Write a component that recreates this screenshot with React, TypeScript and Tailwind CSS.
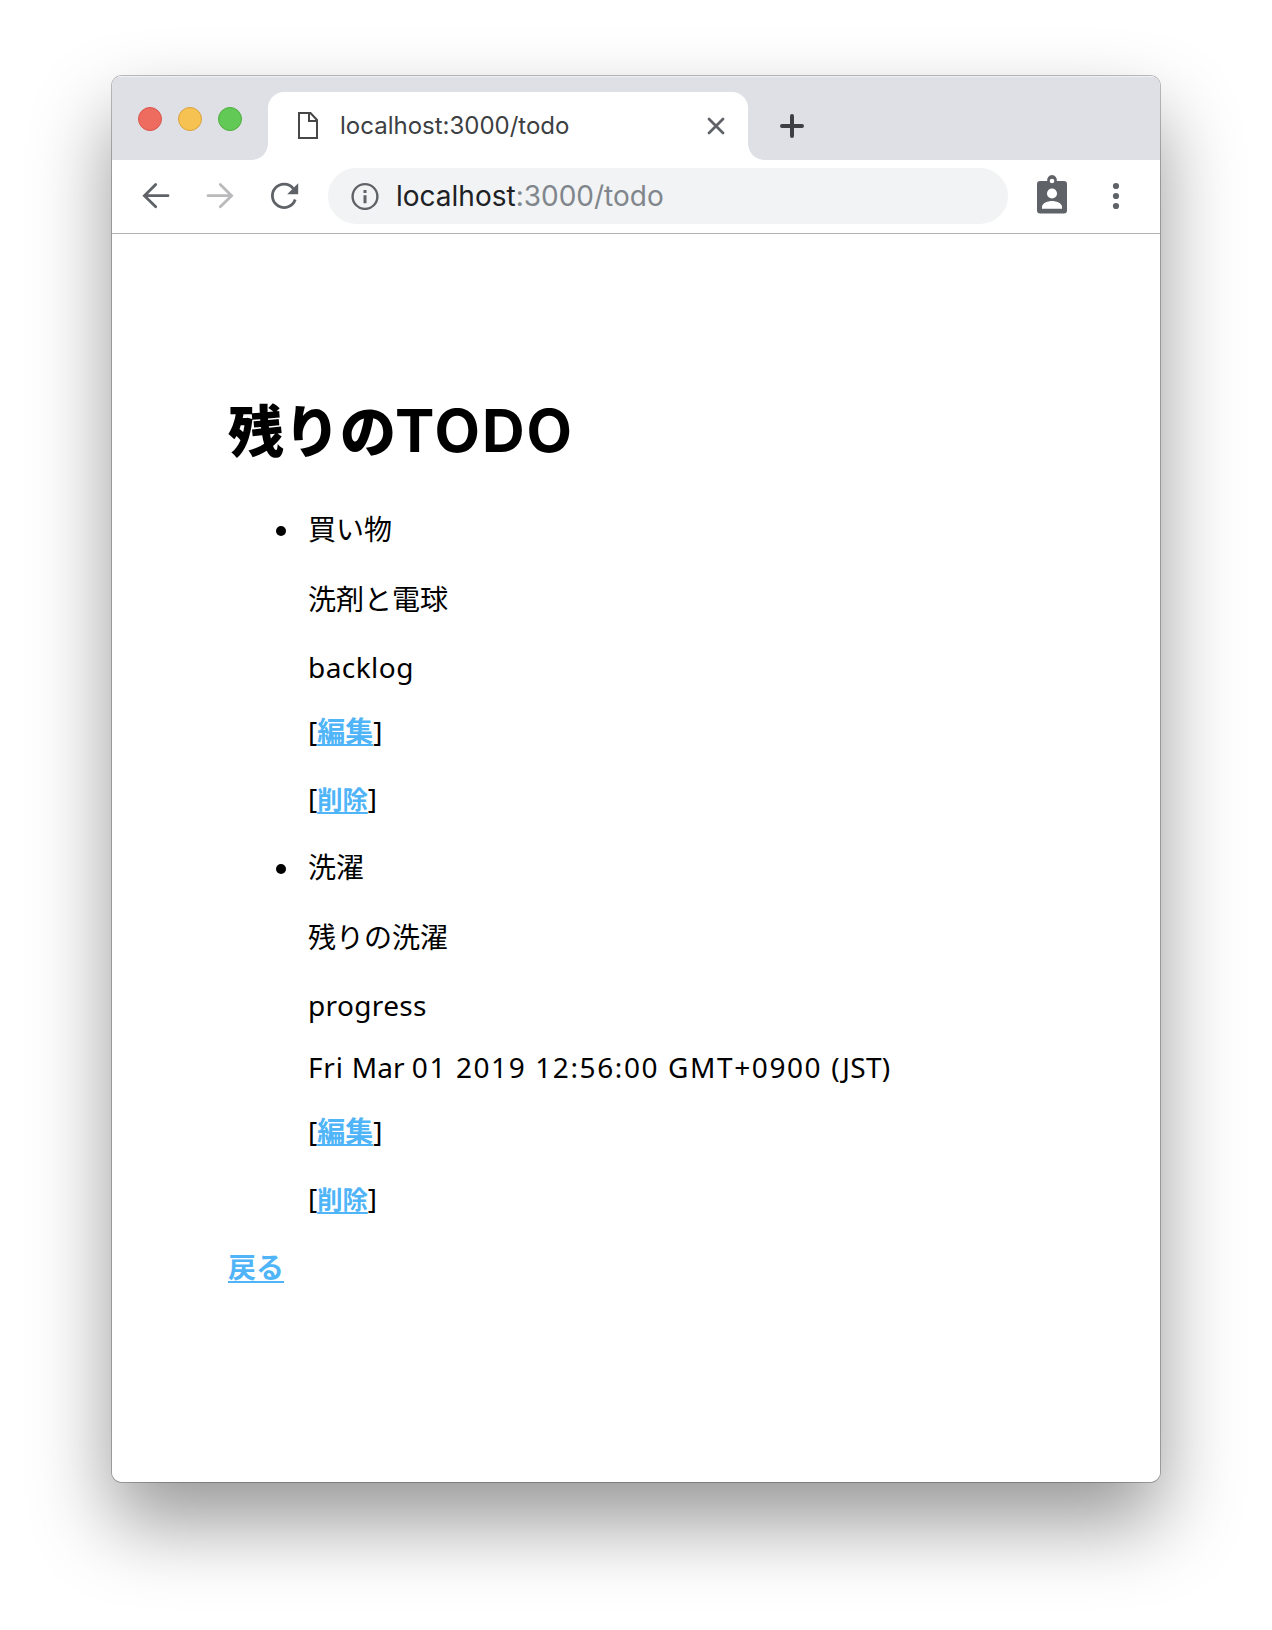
import type { ReactNode } from "react";

function TabBar() {
  return (
    <div className="flex h-[84px] bg-[#dfe0e6] shadow-[inset_0_2px_1px_-1px_#f1f1f4]">
      <div className="flex w-[156px] gap-4 pt-[31px] pl-[26px]">
        <span className="size-6 rounded-full border border-[#d9564b] bg-[#ed6b5f]" />
        <span className="size-6 rounded-full border border-[#dba23d] bg-[#f6c251]" />
        <span className="size-6 rounded-full border border-[#4fae3d] bg-[#62c956]" />
      </div>
      <div className="relative mt-4 flex w-[480px] items-center rounded-t-2xl bg-white pl-[29px]">
        <span className="absolute bottom-0 -left-4 size-4 bg-[radial-gradient(circle_at_0_0,transparent_15.5px,white_16px)]" />
        <span className="absolute -right-4 bottom-0 size-4 bg-[radial-gradient(circle_at_100%_0,transparent_15.5px,white_16px)]" />
        <svg className="h-[30px] w-[22px]" viewBox="0 0 22 30" fill="none" stroke="#474747" strokeWidth="2">
          <path d="M2 2h11.5l6.5 7v18H2zM12 2v8h8" />
        </svg>
        <span className="ml-[21px] w-[366px] font-['Inter'] text-[24px] leading-[30px] whitespace-nowrap text-[#3c4043]">
          localhost:3000/todo
        </span>
        <svg className="size-5 shrink-0" viewBox="0 0 20 20" stroke="#5f6368" strokeWidth="2.8" strokeLinecap="round">
          <path d="M3 3l14 14M17 3L3 17" />
        </svg>
      </div>
      <svg className="mt-9 ml-[30px] size-7" viewBox="0 0 28 28" stroke="#3c4043" strokeWidth="4" strokeLinecap="round">
        <path d="M14 4v20M4 14h20" />
      </svg>
    </div>
  );
}

function Toolbar() {
  return (
    <div className="flex h-[74px] items-start border-b border-[#b2b2b3] bg-white">
      <svg className="mt-5 ml-[28px] size-8" viewBox="0 0 32 32" fill="none" stroke="#5f6368" strokeWidth="2.8" strokeLinecap="round">
        <path d="M28 15.7H5M15.7 4.5L4.4 15.7L15.7 26.8" />
      </svg>
      <svg className="mt-5 ml-8 size-8" viewBox="0 0 32 32" fill="none" stroke="#bababc" strokeWidth="2.8" strokeLinecap="round">
        <path d="M4 15.7h23M16.3 4.5l11.3 11.2l-11.3 11.1" />
      </svg>
      <svg className="mt-5 ml-8 size-8" viewBox="0 0 32 32" fill="none">
        <path d="M27.2 19.5A11.7 11.7 0 1 1 25.3 8.6" stroke="#5f6368" strokeWidth="2.8" />
        <path d="M30.2 3.2v11H19.2z" fill="#5f6368" />
      </svg>
      <div className="mt-2 ml-[28px] flex h-14 w-[680px] items-center rounded-full bg-[#f1f3f4] pl-[22.500px]">
        <svg className="size-7 shrink-0" viewBox="0 0 28 28">
          <circle cx="14" cy="14.5" r="12.4" fill="none" stroke="#5f6368" strokeWidth="2.4" />
          <path d="M12.500 8h3v3h-3zM12.500 13.300h3v8h-3z" fill="#5f6368" />
        </svg>
        <span className="ml-[17.500px] font-['Inter'] text-[28px] leading-9 whitespace-nowrap text-[#202124]">
          localhost<span className="text-[#80868b]">:3000/todo</span>
        </span>
      </div>
      <svg className="mt-[15px] ml-[29px] h-[40px] w-[30px]" viewBox="0 0 30 40">
        <path
          fillRule="evenodd"
          fill="#5f6368"
          d="M3 6H10.200A4.900 4.900 0 1 1 19.800 6H27a3 3 0 0 1 3 3V35.600a3 3 0 0 1-3 3H3a3 3 0 0 1-3-3V9a3 3 0 0 1 3-3zM15 3.700a2.300 2.300 0 1 0 0 4.600a2.300 2.300 0 1 0 0-4.600zM15 13.500a5 5 0 1 0 0 10.100a5 5 0 1 0 0-10.100zM5 33.700H25V32C25 28 19 26 15 26S5 28 5 32z"
        />
      </svg>
      <svg className="mt-5 ml-[33px] size-8" viewBox="0 0 32 32" fill="#5f6368">
        <circle cx="16" cy="6" r="3.1" />
        <circle cx="16" cy="16" r="3.1" />
        <circle cx="16" cy="26" r="3.1" />
      </svg>
    </div>
  );
}

function Bullet() {
  return <span className="absolute top-[17px] -left-[32px] size-2.5 rounded-full bg-black" />;
}

function Actions() {
  return (
    <>
      <p className="mt-6">
        [
        <a className="font-bold text-[#50b4f8] underline decoration-2 underline-offset-[2px] [text-decoration-skip-ink:none]">編集</a>
        ]
      </p>
      <p className="mt-[27px]">
        [
        <a className="text-[25.300px] font-bold text-[#50b4f8] underline decoration-2 underline-offset-[3px] [text-decoration-skip-ink:none]">削除</a>
        ]
      </p>
    </>
  );
}

function Todo({ title, children }: { title: string; children: ReactNode }) {
  return (
    <li className="mb-7">
      <p className="relative">
        <Bullet />
        {title}
      </p>
      {children}
      <Actions />
    </li>
  );
}

export default function App() {
  return (
    <div className="h-[1630px] w-[1272px] overflow-hidden bg-white pt-[76px] pl-[112px]">
      <div className="h-[1406px] w-[1048px] rounded-[10px] shadow-[0_0_0_1px_rgba(0,0,0,0.25),0_40px_80px_rgba(0,0,0,0.41)]">
        <div className="flex h-full flex-col overflow-hidden rounded-[10px] bg-white">
          <TabBar />
          <Toolbar />
          <main className="pt-[156px] pl-[116px] font-['Noto_Sans','Noto_Sans_CJK_JP',sans-serif] text-[28px] leading-[40px] text-black">
            <h1 className="h-20 text-[56px] leading-[80px] font-black whitespace-nowrap">
              残りの<span className="-ml-px font-['Inter'] text-[59px] font-bold tracking-[2px]">TODO</span>
            </h1>
            <ul className="mt-[39px] pl-20">
              <Todo title="買い物">
                <p className="mt-[30px]">洗剤と電球</p>
                <p className="mt-7 tracking-[0.450px]">backlog</p>
              </Todo>
              <Todo title="洗濯">
                <p className="mt-[30px]">残りの洗濯</p>
                <p className="mt-7 tracking-[0.350px]">progress</p>
                <p className="mt-[22px] whitespace-pre">
                  <span className="tracking-[0.800px]">Fri </span>Mar <span className="tracking-[1.600px]">01 2019 12:56:00 GMT+0900 </span>
                  <span className="tracking-[0.300px]">(JST)</span>
                </p>
              </Todo>
            </ul>
            <a className="font-bold text-[#50b4f8] underline decoration-2 underline-offset-[3px] [text-decoration-skip-ink:none]">戻る</a>
          </main>
        </div>
      </div>
    </div>
  );
}
